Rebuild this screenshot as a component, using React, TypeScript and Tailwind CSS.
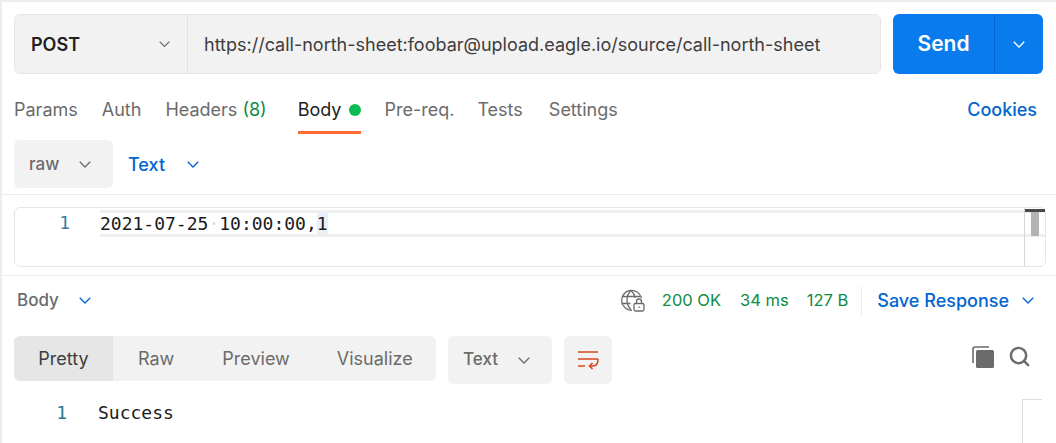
import { Search } from 'lucide-react'

function Chevron({ className }: { className?: string }) {
  return (
    <svg viewBox="0 0 16 10" fill="none" stroke="currentColor" strokeWidth="1.5" className={className}>
      <path d="M2 2l6 6 6-6" />
    </svg>
  )
}

function GlobeLock() {
  return (
    <svg viewBox="0 0 25 24" fill="none" stroke="#6b6b6b" strokeWidth="1.3" className="h-6 w-[25px]">
      <path d="M12 21.3A10 10 0 1 1 21.4 9" />
      <path d="M11 1.5C8.3 4.2 7 7.500 7 11s1.300 7 4 9.500" />
      <path d="M11 1.500c2.300 2 3.700 4.500 4.200 7.500" />
      <path d="M2 7.500h18M1.500 14.500h9" />
      <rect x="14" y="14.500" width="10" height="7.500" rx="1.500" />
      <path d="M16.500 14.500v-2a2.500 2.500 0 0 1 5 0v2" />
      <path d="M19 17.500v1.500" />
    </svg>
  )
}

function WrapIcon() {
  return (
    <svg viewBox="0 0 22 20" fill="none" stroke="#d9481c" strokeWidth="1.6" className="h-5 w-[22px]">
      <path d="M1 2h20M1 9h20M1 16h7" />
      <path d="M21 9c0 4.500-2 7-5 7h-3" />
      <path d="M15.500 13l-3 3 3 3" />
    </svg>
  )
}

function CopyIcon() {
  return (
    <svg viewBox="0 0 22 22" className="h-[22px] w-[22px]" fill="none">
      <path d="M1 17V3a2 2 0 0 1 2-2h14" stroke="#6b6b6b" strokeWidth="1.600" />
      <rect x="4" y="4" width="18" height="18" rx="1.500" fill="#6b6b6b" />
    </svg>
  )
}

const tabs = ['Params', 'Auth']

export default function App() {
  return (
    <div className="h-[443px] w-[1056px] overflow-hidden border-l-2 border-t-2 border-[#ededed] bg-white font-['Inter',sans-serif] text-[#6b6b6b]">
      <div className="flex gap-3 pl-3 pr-3 pt-3">
        <div className="flex h-[60px] w-[867px] rounded-md border border-[#e6e6e6] bg-[#f2f2f2]">
          <div className="flex w-[173px] items-center justify-between border-r border-[#e3e3e3] pl-4 pr-[16px]">
            <span className="text-[18px] font-semibold text-[#212121]">POST</span>
            <Chevron className="w-[13px] text-[#6b6b6b]" />
          </div>
          <div className="flex items-center pl-4 text-[18px] text-[#3d3d3d]">
            https://call-north-sheet:foobar@upload.eagle.io/source/call-north-sheet
          </div>
        </div>
        <div className="flex h-[60px] w-[150px] rounded-md bg-[#097bed] text-white">
          <div className="flex w-[102px] items-center justify-center border-r border-[#0265d2] text-[21px] font-semibold">
            Send
          </div>
          <div className="flex flex-1 items-center justify-center">
            <Chevron className="w-[14px]" />
          </div>
        </div>
      </div>

      <div className="flex h-[60px] items-start justify-between pl-3 pr-[19px] pt-[24px] text-[18px]">
        <div className="flex">
          {tabs.map((tab) => (
            <span key={tab} className="mr-6 leading-[24px]">
              {tab}
            </span>
          ))}
          <span className="mr-[31px] leading-[24px]">
            Headers <span className="text-[#0f8a45]">(8)</span>
          </span>
          <div className="mr-[23px] flex h-[36px] items-start gap-2 border-b-[3px] border-[#ff6c37] leading-[24px] text-[#212121]">
            Body
            <span className="mt-[6px] h-3 w-3 rounded-full bg-[#0cbb52]" />
          </div>
          <span className="mr-[23px] leading-[24px]">Pre-req.</span>
          <span className="mr-[26px] leading-[24px]">Tests</span>
          <span className="leading-[24px]">Settings</span>
        </div>
        <span className="font-medium leading-[24px] text-[#0265d2]">Cookies</span>
      </div>

      <div className="flex h-[61px] items-start border-b border-[#ededed] pl-3 pt-[6px]">
        <div className="flex h-12 w-[99px] items-center gap-[19px] rounded-md bg-[#f2f2f2] pl-[15px] text-[17px] font-medium">
          <span className="pt-px">raw</span>
          <Chevron className="w-[14px]" />
        </div>
        <div className="flex h-12 items-center gap-[21px] pl-[15px] text-[18px] font-medium text-[#0265d2]">
          Text
          <Chevron className="w-[14px]" />
        </div>
      </div>

      <div className="h-[81px] border-b border-[#ededed] pl-3 pt-3">
        <div className="relative h-[60px] w-[1032px] rounded-md border border-[#e6e6e6]">
          <div className="flex">
            <span className="w-[85px] pr-[30px] text-right font-['DejaVu_Sans_Mono',monospace] text-[18px] leading-[29px] text-[#3a7ca5]">
              1
            </span>
            <div className="mt-[2px] h-[27px] flex-1 border-y-[3px] border-[#efefef] font-['DejaVu_Sans_Mono',monospace] text-[18px] leading-[22px] text-[#1a1a1a]">
              2021-07-25<span className="text-[#d8d8d8]">·</span>10:00:00,<span className="bg-[#e8f0fa]">1</span>
            </div>
          </div>
          <div className="absolute bottom-0 right-0 top-0 w-[21px] border-l border-[#d6d6d6]">
            <div className="absolute left-0 right-0 top-[1px] h-[3px] bg-[#4a4a4a]" />
            <div className="absolute left-[6px] top-[4px] h-[24px] w-[8px] bg-[#b3b3b3]" />
          </div>
        </div>
      </div>

      <div className="flex h-[51px] items-center justify-between pb-[2px] pl-[15px] pr-[21px]">
        <div className="flex items-center gap-[19px] text-[17px] font-medium">
          Body
          <Chevron className="w-[14px] text-[#0265d2]" />
        </div>
        <div className="flex items-center text-[16.5px] text-[#0f8a45]">
          <GlobeLock />
          <span className="ml-[17px]">200 OK</span>
          <span className="ml-[19px]">34 ms</span>
          <span className="ml-[18px]">127 B</span>
          <span className="ml-[13px] h-[30px] w-px bg-[#ededed]" />
          <span className="ml-[15px] text-[18px] font-medium text-[#0265d2]">Save Response</span>
          <Chevron className="ml-[12px] w-[14px] text-[#0265d2]" />
        </div>
      </div>

      <div className="flex items-start pl-3 pr-[25px] pt-[9px]">
        <div className="flex h-[45px] w-[422px] items-center overflow-hidden rounded-md bg-[#f2f2f2] text-[18px]">
          <span className="flex h-full w-[99px] items-center justify-center bg-[#e6e6e6] text-[#3d3d3d]">Pretty</span>
          <span className="ml-[25px]">Raw</span>
          <span className="ml-[48px]">Preview</span>
          <span className="ml-[47px]">Visualize</span>
        </div>
        <div className="ml-3 flex h-12 w-[104px] items-center gap-[19px] rounded-md bg-[#f2f2f2] pl-[15px] text-[17px] font-medium">
          Text
          <Chevron className="w-[14px]" />
        </div>
        <div className="ml-3 flex h-12 w-12 items-center justify-center rounded-md bg-[#f2f2f2]">
          <WrapIcon />
        </div>
        <div className="ml-auto flex items-center gap-[14px] pt-[9px]">
          <CopyIcon />
          <Search className="h-[23px] w-[23px] text-[#6b6b6b]" strokeWidth={2.6} />
        </div>
      </div>

      <div className="relative flex pt-[17px] font-['DejaVu_Sans_Mono',monospace] text-[18px] leading-[24px]">
        <span className="w-[65px] text-right text-[#2b7a8c]">1</span>
        <span className="ml-[31px] text-[#1a1a1a]">Success</span>
        <div className="absolute left-[1020px] top-[15px] h-[60px] w-[20px] border-l border-t border-[#dcdcdc]" />
      </div>
    </div>
  )
}
